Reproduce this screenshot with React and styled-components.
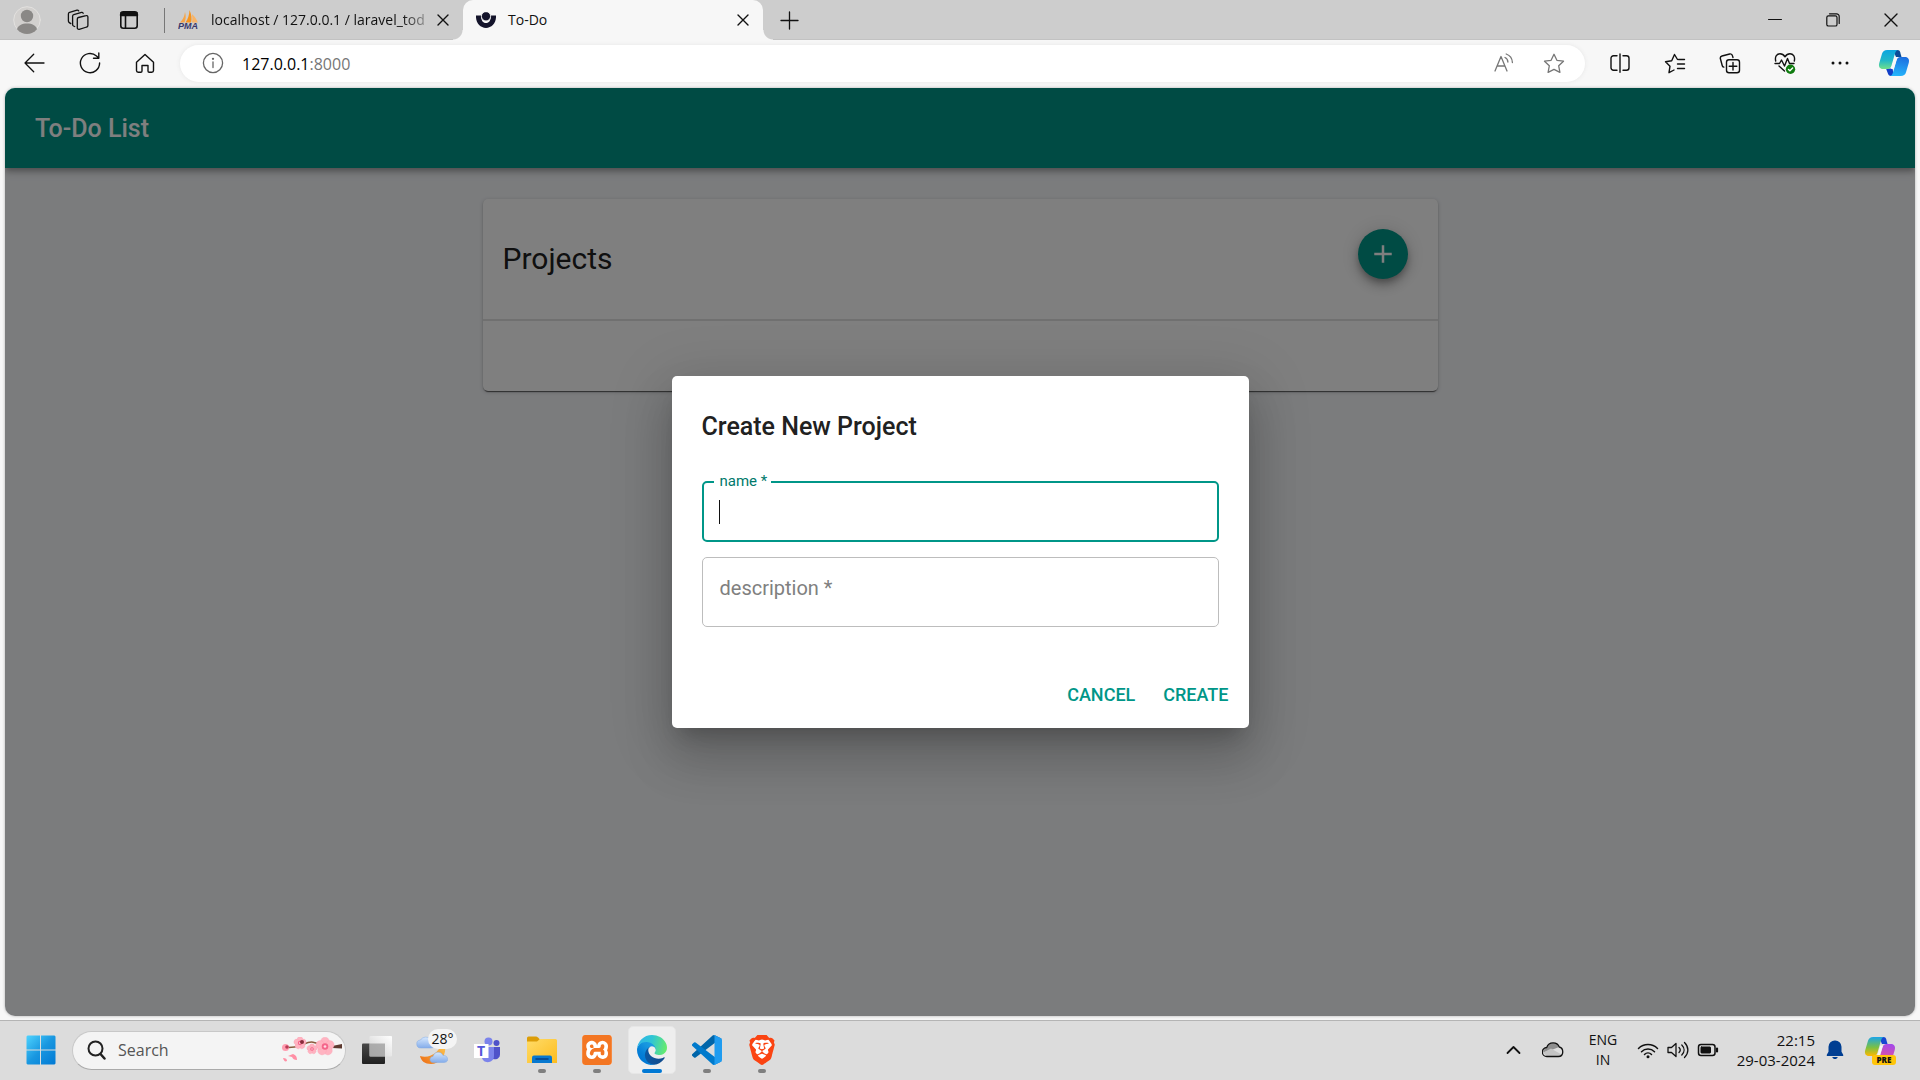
import React from "react";
import styled, { createGlobalStyle, css } from "styled-components";
import { SiBrave, SiXampp } from "react-icons/si";

const GlobalStyle = createGlobalStyle`
  *, *::before, *::after { box-sizing: border-box; }
  html, body { margin: 0; padding: 0; }
  body { font-family: "Open Sans", "Noto Sans", sans-serif; color: #111; background: #f7f7f7; }
  button, input, textarea { font: inherit; }
  h1, h2 { margin: 0; }
`;

const Desktop = styled.div`
  display: flex;
  flex-direction: column;
  height: 100vh;
  overflow: hidden;
`;

const Browser = styled.section`
  flex: 1;
  min-height: 0;
  display: flex;
  flex-direction: column;
  background: #f7f7f7;
`;

/* ---------- tab strip ---------- */

const TabStrip = styled.div`
  display: flex;
  align-items: center;
  height: 40px;
  padding-left: 1px;
  background: #cdcdcd;
  box-shadow: inset 0 -1px 0 #c2c2c2;
`;

const PlainButton = styled.button`
  display: flex;
  align-items: center;
  justify-content: center;
  flex: none;
  width: ${(p) => p.$w}px;
  height: ${(p) => p.$h || 40}px;
  padding: 0;
  border: 0;
  background: none;
  color: ${(p) => p.$color || "#111"};
  cursor: pointer;
`;

const TabDivider = styled.span`
  width: 1px;
  height: 25px;
  margin-left: 10px;
  background: #777;
`;

const Tab = styled.div`
  display: flex;
  align-items: center;
  width: ${(p) => (p.$active ? 300 : 298)}px;
  height: 40px;
  padding: 0 5px 0 13px;
  gap: 12px;
  font-size: 14px;
  line-height: 20px;
  ${(p) =>
    p.$active &&
    css`
      position: relative;
      background: #f7f7f7;
      border-radius: 10px 10px 0 0;
      &::before,
      &::after {
        content: "";
        position: absolute;
        bottom: 0;
        width: 10px;
        height: 10px;
      }
      &::before {
        left: -10px;
        background: radial-gradient(circle at 0 0, #cdcdcd 9px, #f7f7f7 10px);
      }
      &::after {
        right: -10px;
        background: radial-gradient(circle at 100% 0, #cdcdcd 9px, #f7f7f7 10px);
      }
    `}
`;

const TabTitle = styled.span`
  flex: 1;
  min-width: 0;
  margin-right: -12px;
  white-space: nowrap;
  ${(p) => p.$fade && "mask-image: linear-gradient(90deg, #000 88%, rgba(0,0,0,.25));"}
`;

const WindowControls = styled.div`
  display: flex;
  margin-left: auto;
`;

/* ---------- toolbar ---------- */

const Toolbar = styled.div`
  display: flex;
  align-items: center;
  height: 48px;
  padding: 0 0 2px 7px;
`;

const AddressBar = styled.div`
  flex: 1;
  display: flex;
  align-items: center;
  height: 37px;
  margin: 0 7px 0 8px;
  padding: 0 6px 0 22px;
  border-radius: 19px;
  background: #fff;
  box-shadow: 0 0 4px #e6e6e6;
`;

const Address = styled.span`
  flex: 1;
  margin-left: 18px;
  padding-top: 1px;
  font-size: 16px;
  line-height: 24px;
  color: #000;
  span { color: #767676; }
`;

/* ---------- web page ---------- */

const Page = styled.main`
  position: relative;
  flex: 1;
  min-height: 0;
  margin: 0 5px 4px;
  border-radius: 10px;
  overflow: hidden;
  background: #f6f8fb;
  box-shadow: 0 0 3px #aaa;
  font-family: Roboto, sans-serif;
`;

const AppHeader = styled.header`
  position: relative;
  display: flex;
  align-items: center;
  height: 80px;
  padding: 2px 30px 0;
  background: #009688;
  color: #fff;
  box-shadow: 0 3px 5px -1px rgba(0, 0, 0, 0.2), 0 5px 6px rgba(0, 0, 0, 0.14),
    0 1px 13px rgba(0, 0, 0, 0.12);
  h1 { font-size: 25px; line-height: 40px; font-weight: 500; }
`;

const Card = styled.section`
  width: 50%;
  margin: 31px auto 0;
  border-radius: 5px;
  background: #fff;
  box-shadow: 0 3px 1px -2px rgba(0, 0, 0, 0.4), 0 1px 1px rgba(0, 0, 0, 0.28),
    0 1px 4px rgba(0, 0, 0, 0.2);
`;

const CardHeader = styled.div`
  display: flex;
  align-items: flex-start;
  justify-content: space-between;
  padding: 30px 30px 30px 20px;
  border-bottom: 2px solid #e0e0e0;
  h2 { font-size: 30px; line-height: 60px; font-weight: 400; color: #212121; }
`;

const CardBody = styled.div`
  height: 70px;
`;

const AddButton = styled.button`
  display: flex;
  align-items: center;
  justify-content: center;
  width: 50px;
  height: 50px;
  padding: 0;
  border: 0;
  border-radius: 50%;
  background: #009688;
  color: #fff;
  box-shadow: 0 4px 6px -1px rgba(0, 0, 0, 0.25), 0 7px 12px rgba(0, 0, 0, 0.18),
    0 1px 22px rgba(0, 0, 0, 0.14);
`;

const Backdrop = styled.div`
  position: absolute;
  inset: 0;
  display: flex;
  align-items: center;
  justify-content: center;
  background: rgba(0, 0, 0, 0.5);
`;

const Dialog = styled.form`
  width: 577px;
  padding: 31px 30px 11px;
  border-radius: 5px;
  background: #fff;
  box-shadow: 0 14px 19px -9px rgba(0, 0, 0, 0.2), 0 30px 48px 4px rgba(0, 0, 0, 0.14),
    0 11px 58px 10px rgba(0, 0, 0, 0.12);
  h2 { font-size: 25px; line-height: 40px; font-weight: 500; color: #212121; }
`;

const Fields = styled.div`
  display: flex;
  flex-direction: column;
  gap: 15px;
  margin: 34px 0 45px;
`;

const Field = styled.div`
  position: relative;
  display: flex;
`;

const controlStyle = css`
  width: 100%;
  margin: 0;
  border-radius: 5px;
  background: transparent;
  font-size: 20px;
  line-height: 25px;
  color: #212121;
  outline: none;
`;

const TextInput = styled.input`
  ${controlStyle}
  height: 61px;
  padding: 0 16px;
  border: 2px solid #009688;
`;

const TextArea = styled.textarea`
  ${controlStyle}
  height: 70px;
  padding: 20px 16px;
  border: 1px solid #bdbdbd;
  resize: none;
  overflow: hidden;
`;

const FloatingLabel = styled.label`
  position: absolute;
  white-space: nowrap;
  ${(p) =>
    p.$raised
      ? "top: -10px; left: 12px; padding: 0 4px 0 6px; font-size: 15px; line-height: 20px; color: #00796b; background: #fff;"
      : "top: 19px; left: 18px; font-size: 20px; line-height: 25px; color: #808080;"}
`;

const Caret = styled.span`
  position: absolute;
  top: 19px;
  left: 17px;
  width: 1px;
  height: 24px;
  background: #111;
`;

const Actions = styled.div`
  display: flex;
  justify-content: flex-end;
  gap: 8px;
  margin-right: -20px;
`;

const TextButton = styled.button`
  height: 45px;
  padding: 0 10px;
  border: 0;
  background: none;
  color: #009688;
  font-size: 18px;
  line-height: 24px;
  font-weight: 500;
  text-transform: uppercase;
`;

/* ---------- taskbar ---------- */

const Taskbar = styled.footer`
  display: flex;
  align-items: center;
  flex: none;
  gap: 7px;
  height: 60px;
  padding: 0 15px 1px 17px;
  border-top: 1px solid #b4b4b4;
  background: #dcdcdc;
`;

const SearchBox = styled.label`
  display: flex;
  align-items: center;
  width: 274px;
  height: 39px;
  padding: 0 2px 0 14px;
  border: 1px solid #c8c8c8;
  border-bottom-color: #aaa;
  border-radius: 20px;
  background: #f4f4f4;
  input {
    flex: 1;
    min-width: 0;
    margin-left: 12px;
    padding: 0;
    border: 0;
    outline: 0;
    background: none;
    font-size: 16px;
    line-height: 24px;
    color: #222;
  }
  input::placeholder { color: #555; opacity: 1; }
`;

const TaskButton = styled.button`
  position: relative;
  display: flex;
  align-items: center;
  justify-content: center;
  flex: none;
  width: 48px;
  height: 48px;
  padding: 0;
  border: 1px solid ${(p) => (p.$active ? "#e6e6e6" : "transparent")};
  border-radius: 5px;
  background: ${(p) => (p.$active ? "#eeeeee" : "none")};
  ${(p) =>
    p.$running &&
    css`
      &::after {
        content: "";
        position: absolute;
        bottom: 0;
        left: 50%;
        width: ${p.$active ? 20 : 8}px;
        height: 4px;
        margin-left: ${p.$active ? -10 : -4}px;
        border-radius: 2px;
        background: ${p.$active ? "#0078d4" : "#7f7f7f"};
      }
    `}
`;

const Temperature = styled.span`
  position: absolute;
  top: 2px;
  right: -2px;
  width: 29px;
  border-radius: 10px;
  background: #f4f4f4;
  text-align: center;
  font-size: 14px;
  line-height: 20px;
  color: #111;
`;

const BrandTile = styled.span`
  display: flex;
  border-radius: 3px;
  background: ${(p) => p.$bg};
`;

const Tray = styled.div`
  display: flex;
  align-items: center;
  margin-left: auto;
`;

const TrayText = styled.div`
  width: ${(p) => p.$w}px;
  font-size: ${(p) => p.$size}px;
  line-height: 20px;
  text-align: ${(p) => p.$align};
  white-space: nowrap;
`;

/* ---------- drawings ---------- */

const Svg = ({ w, h, sw = 1.4, children }) => (
  <svg width={w} height={h} viewBox={`0 0 ${w} ${h}`} fill="none" stroke="currentColor"
    strokeWidth={sw} strokeLinecap="round" strokeLinejoin="round" aria-hidden="true">
    {children}
  </svg>
);

const AvatarIcon = () => (
  <Svg w={28} h={28}>
    <circle cx="14" cy="14" r="13.3" fill="#d2d0ce" stroke="#e3e1df" strokeWidth="1" />
    <circle cx="14" cy="10" r="6.2" fill="#8a8886" stroke="none" />
    <path d="M4 23.3C5 19.500 9 17.600 14 17.600s9 1.900 10 5.700A13 13 0 0 1 4 23.300Z" fill="#8a8886" stroke="none" />
  </Svg>
);
const WorkspacesIcon = () => (
  <Svg w={22} h={22} sw={1.3}>
    <path d="m11.500 8.500 7.500-1.900a1.500 1.500 0 0 1 1.900 1.400v8.500c0 .8-.4 1.300-1.200 1.500l-7.500 2.300a1.500 1.500 0 0 1-1.900-1.400v-8.900c0-.8.4-1.300 1.200-1.500Z" />
    <path d="M7.700 17.500 6.500 17c-.6-.3-.9-.8-.9-1.400V7.300c0-.8.5-1.400 1.200-1.600l7.700-2.300c.8-.2 1.300.1 1.700.8" />
    <path d="m3.800 14.600-1.500-1c-.6-.4-.9-.9-.9-1.600V5c0-.8.5-1.400 1.200-1.600l7.400-2.200c.8-.2 1.300.1 1.700.7" />
  </Svg>
);
const VerticalTabsIcon = () => (
  <Svg w={20} h={20} sw={1.6}>
    <rect x="1.800" y="1.800" width="16.400" height="16.400" rx="2.500" />
    <path d="M1.500 2h17v4h-17Z" fill="currentColor" stroke="none" />
    <path d="M2 5h16" strokeWidth="2.500" /><path d="M6.500 6v12" />
  </Svg>
);
const PmaIcon = () => (
  <svg width="21" height="20" viewBox="0 0 21 20" aria-hidden="true">
    <path d="M2 12.500C5 10 6.500 6 7 2c1.300 4 .8 7.500-.5 10.500Z" fill="#f6a64a" />
    <path d="M7.500 12.500C10 9 11.300 5 11.500 0c2 4 2.500 9 1.500 12.500Z" fill="#f7941d" />
    <path d="M14 12.500c.6-3 .4-6-.2-8.500 2.700 2 4.800 5 6 8.500Z" fill="#f9b466" />
    <text x="0" y="19" fontFamily="Liberation Sans, sans-serif" fontSize="9" fontWeight="700" fontStyle="italic" fill="#39396b">PMA</text>
  </svg>
);
const TodoFavicon = () => (
  <svg width="20" height="16" viewBox="0 0 20 16" fill="#14142b" aria-hidden="true">
    <path d="M0 3.500h5c0 5 2 7.500 5 7.500s5-2.500 5-7.500h5C20.500 10.500 16 16 10 16S-.5 10.500 0 3.500Z" />
    <circle cx="10" cy="4.300" r="4.600" stroke="#f7f7f7" strokeWidth=".8" />
  </svg>
);
const CloseIcon = ({ s = 11 }) => (
  <Svg w={s + 2} h={s + 2}><path d={`M1 1 ${s + 1} ${s + 1}M${s + 1} 1 1 ${s + 1}`} /></Svg>
);
const PlusIcon = () => <Svg w={19} h={19} sw={1.3}><path d="M9.500 1v17M1 9.500h17" /></Svg>;
const MinimiseIcon = () => <Svg w={14} h={14} sw={1}><path d="M.5 6.500h13" /></Svg>;
const RestoreIcon = () => (
  <Svg w={14} h={14} sw={1.2}>
    <rect x=".8" y="2.800" width="10.200" height="10.200" rx="1.600" />
    <path d="M3.500.8h7a2.600 2.600 0 0 1 2.700 2.700v7" />
  </Svg>
);
const BackIcon = () => <Svg w={21} h={20} sw={1.3}><path d="M20 10H1M9.700 1.300 1 10l8.700 8.700" /></Svg>;
const RefreshIcon = () => (
  <Svg w={22} h={22} sw={1.4}><path d="M20.600 11A9.600 9.600 0 1 1 17.500 4l2 1.800M19.800 1v5.300h-5.300" /></Svg>
);
const HomeIcon = () => (
  <Svg w={20} h={21} sw={1.4}>
    <path d="M1.500 9.300 10 1.500l8.500 7.800v8.200a1.700 1.700 0 0 1-1.700 1.700h-2.600a1.200 1.200 0 0 1-1.200-1.200v-5.500H7V18a1.200 1.200 0 0 1-1.200 1.200H3.200a1.700 1.700 0 0 1-1.700-1.700Z" />
  </Svg>
);
const InfoIcon = () => (
  <Svg w={22} h={22} sw={1.3}>
    <circle cx="11" cy="11" r="9.600" /><path d="M11 10v5.500" /><circle cx="11" cy="6.800" r=".5" fill="currentColor" />
  </Svg>
);
const ReadAloudIcon = () => (
  <Svg w={20} h={20} sw={1.3}>
    <path d="m1 18 6-14.500L13 18M3.300 13h7.500M11 4.500c1.800.8 2.800 2.400 2.900 4.500M12.200 1c3.800 1.300 6 4.300 6.200 8.500" />
  </Svg>
);
const STAR = "m11 1.300 2.900 6 6.600.9-4.800 4.600 1.200 6.600L11 16.300l-5.900 3.100 1.200-6.600L1.500 8.200l6.600-.9Z";
const StarIcon = () => <Svg w={22} h={21} sw={1.3}><path d={STAR} /></Svg>;
const SplitIcon = () => (
  <Svg w={20} h={20} sw={1.4}>
    <path d="M7 2.800H3.500a2.500 2.500 0 0 0-2.500 2.500v9.400a2.500 2.500 0 0 0 2.500 2.500H7M13 2.800h3.500A2.500 2.500 0 0 1 19 5.300v9.400a2.500 2.500 0 0 1-2.500 2.500H13M10 1v18.300" />
  </Svg>
);
const FavouritesIcon = () => (
  <Svg w={22} h={21} sw={1.4}>
    <path d="M10 17 5 19.700l1-6.500-4.500-4.500 6.200-.9L10.500 1.500l3 5M14.500 6.500h6M13.500 11h7M13.500 15.500h7" />
  </Svg>
);
const CollectionsIcon = () => (
  <Svg w={22} h={21} sw={1.4}>
    <path d="M14 4.500 13.400 2.600A2.200 2.200 0 0 0 10.700 1L3 3A2.300 2.300 0 0 0 1.400 5.800l1.800 6.700c.2.900.8 1.400 1.600 1.600" />
    <rect x="7.500" y="6.800" width="13" height="13" rx="2.500" /><path d="M14 9.500v7.600M10.200 13.300h7.600" />
  </Svg>
);
const HealthIcon = () => (
  <Svg w={22} h={22} sw={1.4}>
    <path d="M1.700 9C.6 4.500 3 1.800 6 1.800c2.200 0 3.800 1.200 5 3 1.200-1.800 2.800-3 5-3 3 0 5.400 2.700 4.300 7.200M1 11.500h4.500l2-3.500 3 6 3-7.500 2 5H20M5 14l5.500 5" />
    <circle cx="16.500" cy="17.300" r="4.700" fill="#107c10" stroke="none" />
    <path d="m14.500 17.500 1.400 1.300 2.700-2.900" stroke="#fff" />
  </Svg>
);
const MoreIcon = () => (
  <Svg w={18} h={4}>
    {[2, 9, 16].map((x) => <circle key={x} cx={x} cy="2" r="1.500" fill="currentColor" stroke="none" />)}
  </Svg>
);
const CopilotIcon = ({ pre }) => {
  const id = pre ? "p" : "c";
  const c = pre
    ? ["#1aa5e8", "#7bc043", "#ffb800", "#1746d1", "#a549e8", "#f0568c"]
    : ["#0ba5e0", "#22b8c8", "#6fe08a", "#123fc8", "#1c6fe0", "#25b5fb"];
  return (
    <svg width="32" height="30" viewBox="0 0 32 30" aria-hidden="true">
      <defs>
        <linearGradient id={`${id}1`} x1="0" y1="0" x2="0" y2="1">
          <stop offset="0" stopColor={c[0]} /><stop offset=".55" stopColor={c[1]} /><stop offset="1" stopColor={c[2]} />
        </linearGradient>
        <linearGradient id={`${id}2`} x1=".6" y1="0" x2=".4" y2="1">
          <stop offset="0" stopColor={c[4]} /><stop offset="1" stopColor={c[5]} />
        </linearGradient>
      </defs>
      <path d="M15 2h4.500c1.500 0 2.300.8 2.700 2.200L23.500 9H18Z" fill={pre ? c[3] : "#0b4b96"} />
      <path d="M8 20.500h6.500L16 28h-3c-1.800 0-2.600-.9-3.100-2.500Z" fill={pre ? "#f58b45" : c[3]} />
      <path d="M9.200 2H20c-2 .4-2.700 2.400-3.300 4.500l-3.200 11c-.6 2.100-1.700 3.500-4 3.500H5c-3.200 0-4.700-2.500-3.800-5.800L4 5.800C4.700 3.300 6.500 2 9.200 2Z" fill={`url(#${id}1)`} />
      <path d="M22.800 28H12c2-.4 2.700-2.400 3.300-4.500l3.200-11c.6-2.100 1.700-3.500 4-3.500H27c3.200 0 4.700 2.500 3.800 5.800L28 24.200c-.7 2.500-2.500 3.800-5.200 3.800Z" fill={`url(#${id}2)`} />
      <path d="M16.300 10.500h2.700l-3.300 10.500H13Z" fill="#f7f7f7" />
      {pre && (
        <g>
          <rect x="8" y="20" width="24" height="10" rx="3" fill="#ffc50a" />
          <text x="20" y="28" textAnchor="middle" fontFamily="Open Sans, sans-serif" fontSize="8" fontWeight="800" fill="#111">PRE</text>
        </g>
      )}
    </svg>
  );
};

const WindowsIcon = () => (
  <svg width="30" height="30" viewBox="0 0 30 30" aria-hidden="true">
    <defs>
      <linearGradient id="win" x1="0" y1="0" x2="30" y2="30" gradientUnits="userSpaceOnUse">
        <stop stopColor="#50d5ff" /><stop offset=".5" stopColor="#1997e0" /><stop offset="1" stopColor="#0078d4" />
      </linearGradient>
    </defs>
    <path d="M1.500.5H14v14H.5v-13Zm13.500 0h13.500l1 1v13H15ZM.5 15.500H14v14H1.500l-1-1Zm14.500 0h14.500v13l-1 1H15Z" fill="url(#win)" />
  </svg>
);
const SearchIcon = () => (
  <svg width="19" height="20" viewBox="0 0 19 20" fill="none" stroke="#222" strokeWidth="2" strokeLinecap="round" aria-hidden="true">
    <circle cx="8.500" cy="8.500" r="7" /><path d="m13.500 14 4 4.500" strokeWidth="2.500" />
  </svg>
);
const Flower = ({ x, y, r }) => (
  <g transform={`translate(${x} ${y})`}>
    {[0, 72, 144, 216, 288].map((a) => (
      <circle key={a} cy={-r * 0.56} r={r * 0.48} fill="#ffb3c1" stroke="#fa9db0" strokeWidth=".3" transform={`rotate(${a})`} />
    ))}
    <circle r={r * 0.36} fill="#f4658a" /><circle r={r * 0.15} fill="#ffd9e2" />
  </g>
);
const BlossomIcon = () => (
  <svg width="62" height="26" viewBox="0 0 62 26" fill="none" aria-hidden="true">
    <path d="M3 10c8 2 14-1 20-3 9-4 12-1 18 2l9 2" stroke="#8a5a3c" strokeWidth="1.500" />
    <path d="m51 9 10-2v4.500l-10-.5Z" fill="#5d3a30" />
    <Flower x={44} y={9.5} r={9} /><Flower x={31} y={12} r={5} /><Flower x={19} y={6} r={6} />
    <circle cx="4.500" cy="10.500" r="3.500" fill="#ff9db0" /><circle cx="6" cy="10" r="1.800" fill="#b93a55" />
    <circle cx="21" cy="5" r="2" fill="#8a2b3b" />
    <path d="m7 19 5-2c3 1 4 3 4 6-3 0-4-1-5-3ZM2 21c3 0 4 1 4 3-2 1-3 0-4-3Z" fill="#ff8fa5" />
  </svg>
);
const TaskViewIcon = () => (
  <svg width="30" height="28" viewBox="0 0 30 28" aria-hidden="true">
    <defs>
      <linearGradient id="tv1" x1="0" y1="0" x2="0" y2="1"><stop stopColor="#484848" /><stop offset="1" stopColor="#202020" /></linearGradient>
      <linearGradient id="tv2" x1="0" y1="1" x2="1" y2="0"><stop stopColor="#d0d0d0" /><stop offset="1" stopColor="#fff" /></linearGradient>
    </defs>
    <rect y="7.500" width="23" height="20.500" rx="1" fill="url(#tv1)" />
    <rect x="7.500" width="22.500" height="20.500" rx="1" fill="url(#tv2)" />
    <path d="M7.500 7.500H23v13H7.500Z" fill="#999" opacity=".75" />
  </svg>
);
const WeatherIcon = () => (
  <svg width="32" height="30" viewBox="0 0 32 30" aria-hidden="true">
    <defs>
      <linearGradient id="cl" x1="0" y1="0" x2="0" y2="1"><stop stopColor="#d5e7fd" /><stop offset="1" stopColor="#84acea" /></linearGradient>
      <linearGradient id="mn" x1="1" y1="0" x2="0" y2="1"><stop stopColor="#ffd257" /><stop offset="1" stopColor="#ed6b12" /></linearGradient>
    </defs>
    <path d="M26 5C34 15 26 29 15 29 9 29 5 26 4 21c10 3 21-4 22-16Z" fill="url(#mn)" />
    <path d="M5 13a4 4 0 0 1-.5-8C6 2 13 0 15 6c3 0 4 2 4 4 0 2-2 3-4 3Z" fill="url(#cl)" stroke="#83aae3" strokeWidth=".5" />
    <path d="M17 27.500c-4 0-4-6 0-6 1-5 8-6 10-1 5-1 7 7 1 7Z" fill="url(#cl)" stroke="#83aae3" strokeWidth=".5" />
  </svg>
);
const TeamsIcon = () => (
  <svg width="28" height="26" viewBox="0 0 28 26" aria-hidden="true">
    <circle cx="23.500" cy="6" r="3" fill="#4f52c9" /><path d="M19 10h8v7c0 4-3 6-7 5Z" fill="#4f52c9" />
    <circle cx="15.500" cy="4.500" r="4" fill="#7b83eb" /><path d="M9 10h12v9c0 8-12 8-12 1Z" fill="#7b83eb" />
    <rect x="1" y="7" width="14.500" height="14" fill="#fff" />
    <text x="8" y="18.500" textAnchor="middle" fontFamily="Open Sans, sans-serif" fontWeight="700" fontSize="14" fill="#5558d9">T</text>
  </svg>
);
const FolderIcon = () => (
  <svg width="30" height="28" viewBox="0 0 30 28" aria-hidden="true">
    <defs>
      <linearGradient id="fd" x1="0" y1="0" x2="1" y2="1"><stop stopColor="#ffdc69" /><stop offset="1" stopColor="#fdbc1e" /></linearGradient>
    </defs>
    <path d="M0 2Q0 .5 1.500.5H9q1 0 2 1L13 3.500V8H0Z" fill="#dc9d08" />
    <path d="M0 5.500h10L13 3h15.500Q30 3 30 4.500V27H0Z" fill="url(#fd)" />
    <path d="M5 27v-5.500Q5 19.500 7 19.500h16q2 0 2 2V27Z" fill="#0878cf" />
    <path d="M9 23h12" stroke="#063f86" strokeWidth="1.500" strokeLinecap="round" />
  </svg>
);
const EdgeIcon = () => (
  <svg width="30" height="30" viewBox="0 0 256 256" aria-hidden="true">
    <defs>
      <linearGradient id="e1" x1="63" y1="178" x2="241" y2="178" gradientUnits="userSpaceOnUse"><stop stopColor="#0c59a4" /><stop offset="1" stopColor="#114a8b" /></linearGradient>
      <linearGradient id="e2" x1="157" y1="100" x2="46" y2="221" gradientUnits="userSpaceOnUse"><stop stopColor="#1b9de2" /><stop offset=".3" stopColor="#1595df" /><stop offset=".7" stopColor="#0680d7" /><stop offset="1" stopColor="#0078d4" /></linearGradient>
      <linearGradient id="e3" x1="10" y1="70" x2="250" y2="130" gradientUnits="userSpaceOnUse"><stop stopColor="#30b6e6" /><stop offset=".45" stopColor="#2fc5d5" /><stop offset="1" stopColor="#66eb6e" /></linearGradient>
    </defs>
    <g transform="translate(-4.630 -4.920)">
      <path fill="url(#e1)" d="M235.680 195.460a93.730 93.730 0 0 1-10.540 4.710 101.870 101.870 0 0 1-35.900 6.460c-47.320 0-88.540-32.550-88.540-74.320A31.480 31.480 0 0 1 117.130 105c-42.800 1.800-53.800 46.400-53.800 72.530 0 73.880 68.090 81.370 82.760 81.370 7.910 0 19.840-2.300 27-4.560l1.310-.44a128.340 128.340 0 0 0 66.600-52.800 4 4 0 0 0-5.320-5.640Z" />
      <path fill="url(#e2)" d="M110.340 246.340A79.200 79.200 0 0 1 87.600 225a80.720 80.720 0 0 1 29.530-120c3.120-1.470 8.450-4.130 15.540-4a32.350 32.350 0 0 1 25.690 13 31.880 31.880 0 0 1 6.360 18.660c0-.21 24.460-79.600-80-79.600-43.900 0-80 41.660-80 78.210a130.150 130.150 0 0 0 12.110 56 128 128 0 0 0 156.380 67.110 75.550 75.550 0 0 1-62.780-8Z" />
      <path fill="url(#e3)" d="M156.940 153.780c-.81 1.050-3.300 2.500-3.300 5.660 0 2.610 1.700 5.120 4.720 7.230 14.380 10 41.490 8.680 41.560 8.680a59.560 59.560 0 0 0 30.270-8.350 61.380 61.380 0 0 0 30.430-52.880c.26-22.410-8-37.310-11.340-43.910C228.090 28.760 182.350 4.920 132.610 4.920a128 128 0 0 0-128 126.200c.48-36.540 36.800-66.050 80-66.050 3.500 0 23.460.34 42 10.070 16.340 8.580 24.900 18.940 30.850 29.210 6.180 10.670 7.280 24.150 7.280 29.520s-2.740 13.330-7.800 19.910Z" />
    </g>
  </svg>
);
const CodeIcon = () => (
  <svg width="30" height="30" viewBox="0 0 100 100" aria-hidden="true">
    <path fill="#0065a9" d="M96.460 10.800 75.860.88A6.200 6.200 0 0 0 68.750 2.080L1.300 63.580a4.170 4.170 0 0 0 0 6.170l5.510 5a4.160 4.160 0 0 0 5.320.24L93.360 13.370A4.130 4.130 0 0 1 100 16.670v-.24a6.250 6.250 0 0 0-3.540-5.630Z" />
    <path fill="#007acc" d="m96.460 89.200-20.600 9.920a6.200 6.200 0 0 1-7.110-1.200L1.300 36.420a4.170 4.170 0 0 1 0-6.170l5.510-5a4.160 4.160 0 0 1 5.320-.24l81.230 61.620A4.130 4.130 0 0 0 100 83.330v.24a6.250 6.250 0 0 1-3.540 5.630Z" />
    <path fill="#1f9cf0" d="M75.860 99.130a6.200 6.200 0 0 1-7.110-1.210C71.060 100.220 75 98.590 75 95.330V4.670C75 1.410 71.060-.22 68.750 2.080A6.200 6.200 0 0 1 75.860.87l20.600 9.910A6.250 6.250 0 0 1 100 16.410v67.180a6.250 6.250 0 0 1-3.540 5.630Z" />
  </svg>
);
const BraveIcon = () => (
  <svg width="30" height="30" viewBox="0 0 30 30" aria-hidden="true">
    <path d="M8 5h14l3 5-2 10-8 7-8-7-2-10Z" fill="#fff" />
    <SiBrave size={30} color="#fb4412" />
  </svg>
);
const ChevronUpIcon = () => <Svg w={15} h={10} sw={1.8}><path d="m1.500 8 6-6 6 6" /></Svg>;
const CloudIcon = () => (
  <Svg w={22} h={16} sw={1.3}>
    <path d="M5 14.500a4.500 4.500 0 0 1-.3-9C7-.5 15-.5 17.300 5c4.500 1 5 9.500-1 9.500Z" fill="#dedede" stroke="none" />
    <path d="M1.300 10.500C1 8 3 6 4.700 5.500 7-.5 15-.5 17.300 5l-6 2.300Z" fill="#8f8f8f" stroke="none" />
    <path d="M1.300 10.500 9 6.500l10.500 6-3 2H5Z" fill="#c4c4c4" stroke="none" />
    <path d="M5 14.500a4.500 4.500 0 0 1-.3-9C7-.5 15-.5 17.300 5c4.500 1 5 9.500-1 9.500Z" />
  </Svg>
);
const WifiIcon = () => (
  <Svg w={22} h={17} sw={1.5}>
    <path d="M1.500 6.500a13.500 13.500 0 0 1 19 0M4.500 9.700a9.200 9.200 0 0 1 13 0M7.500 12.500a5 5 0 0 1 7 0" />
    <circle cx="11" cy="14.800" r="1.500" fill="currentColor" stroke="none" />
  </Svg>
);
const SpeakerIcon = () => (
  <Svg w={22} h={18} sw={1.3}>
    <path d="M1 6.500v5h3.500L9 15.500v-13L4.500 6.500ZM12 6.500c1.500 1.500 1.500 3.500 0 5M14.800 4c3 3 3 7 0 10M17.500 1.500c4.500 4.500 4.500 10.500 0 15" />
  </Svg>
);
const BatteryIcon = () => (
  <Svg w={22} h={14} sw={1.5}>
    <rect x="1.500" y="1.500" width="16.500" height="11" rx="2.500" />
    <rect x="4" y="4" width="9.500" height="6" rx=".5" fill="currentColor" stroke="currentColor" strokeWidth="1" />
    <path d="M20 5.500v3" strokeWidth="2.200" />
  </Svg>
);
const BellIcon = () => (
  <svg width="18" height="20" viewBox="0 0 18 20" fill="#003e92" aria-hidden="true">
    <path d="M9 .5a6.300 6.300 0 0 1 6.500 6.300v5l1.700 3v1.200H.8v-1.200l1.700-3v-5A6.300 6.300 0 0 1 9 .5ZM6.300 17h5.400c-.6 2.700-4.800 2.700-5.400 0Z" />
  </svg>
);

/* ---------- composition ---------- */

const toolbarActions = [
  ["Split screen", SplitIcon],
  ["Favourites", FavouritesIcon],
  ["Collections", CollectionsIcon],
  ["Browser essentials", HealthIcon],
  ["Settings and more", MoreIcon],
];

export default function App() {
  return (
    <Desktop>
      <GlobalStyle />
      <Browser>
        <TabStrip>
          <PlainButton $w={51} aria-label="Profile"><AvatarIcon /></PlainButton>
          <PlainButton $w={51} aria-label="Workspaces"><WorkspacesIcon /></PlainButton>
          <PlainButton $w={51} aria-label="Tab actions"><VerticalTabsIcon /></PlainButton>
          <TabDivider />
          <Tab>
            <PmaIcon />
            <TabTitle $fade>localhost / 127.0.0.1 / laravel_tod</TabTitle>
            <PlainButton $w={30} aria-label="Close tab"><CloseIcon s={10} /></PlainButton>
          </Tab>
          <Tab $active>
            <TodoFavicon />
            <TabTitle>To-Do</TabTitle>
            <PlainButton $w={30} aria-label="Close tab"><CloseIcon s={10} /></PlainButton>
          </Tab>
          <PlainButton $w={53} aria-label="New tab"><PlusIcon /></PlainButton>
          <WindowControls>
            <PlainButton $w={58} aria-label="Minimise"><MinimiseIcon /></PlainButton>
            <PlainButton $w={58} aria-label="Restore"><RestoreIcon /></PlainButton>
            <PlainButton $w={58} aria-label="Close window"><CloseIcon s={12} /></PlainButton>
          </WindowControls>
        </TabStrip>
        <Toolbar>
          <PlainButton $w={55} aria-label="Back"><BackIcon /></PlainButton>
          <PlainButton $w={55} aria-label="Refresh"><RefreshIcon /></PlainButton>
          <PlainButton $w={55} aria-label="Home"><HomeIcon /></PlainButton>
          <AddressBar>
            <PlainButton $w={22} $h={36} $color="#666" aria-label="Site information"><InfoIcon /></PlainButton>
            <Address>127.0.0.1<span>:8000</span></Address>
            <PlainButton $w={50} $h={36} $color="#767676" aria-label="Read aloud"><ReadAloudIcon /></PlainButton>
            <PlainButton $w={50} $h={36} $color="#767676" aria-label="Add to favourites"><StarIcon /></PlainButton>
          </AddressBar>
          {toolbarActions.map(([name, Icon]) => (
            <PlainButton key={name} $w={55} aria-label={name}><Icon /></PlainButton>
          ))}
          <PlainButton $w={53} aria-label="Copilot"><CopilotIcon /></PlainButton>
        </Toolbar>
        <Page>
          <AppHeader><h1>To-Do List</h1></AppHeader>
          <Card>
            <CardHeader>
              <h2>Projects</h2>
              <AddButton aria-label="Add project">
                <svg width="30" height="30" viewBox="0 0 24 24" fill="currentColor" aria-hidden="true">
                  <path d="M19 13h-6v6h-2v-6H5v-2h6V5h2v6h6v2z" />
                </svg>
              </AddButton>
            </CardHeader>
            <CardBody />
          </Card>
          <Backdrop>
            <Dialog role="dialog" aria-labelledby="dialog-title" onSubmit={(e) => e.preventDefault()}>
              <h2 id="dialog-title">Create New Project</h2>
              <Fields>
                <Field>
                  <TextInput id="name" type="text" />
                  <FloatingLabel htmlFor="name" $raised>name *</FloatingLabel>
                  <Caret />
                </Field>
                <Field>
                  <TextArea id="description" rows={1} />
                  <FloatingLabel htmlFor="description">description *</FloatingLabel>
                </Field>
              </Fields>
              <Actions>
                <TextButton type="button">Cancel</TextButton>
                <TextButton type="submit">Create</TextButton>
              </Actions>
            </Dialog>
          </Backdrop>
        </Page>
      </Browser>
      <Taskbar>
        <TaskButton aria-label="Start"><WindowsIcon /></TaskButton>
        <SearchBox>
          <SearchIcon />
          <input type="text" placeholder="Search" aria-label="Search" />
          <BlossomIcon />
        </SearchBox>
        <TaskButton aria-label="Task view"><TaskViewIcon /></TaskButton>
        <TaskButton aria-label="Weather"><WeatherIcon /><Temperature>28°</Temperature></TaskButton>
        <TaskButton aria-label="Teams"><TeamsIcon /></TaskButton>
        <TaskButton aria-label="File Explorer" $running><FolderIcon /></TaskButton>
        <TaskButton aria-label="XAMPP" $running>
          <BrandTile $bg="#fff"><SiXampp size={30} color="#f37623" /></BrandTile>
        </TaskButton>
        <TaskButton aria-label="Edge" $running $active><EdgeIcon /></TaskButton>
        <TaskButton aria-label="Visual Studio Code" $running><CodeIcon /></TaskButton>
        <TaskButton aria-label="Brave" $running><BraveIcon /></TaskButton>
        <Tray>
          <PlainButton $w={40} aria-label="Hidden icons"><ChevronUpIcon /></PlainButton>
          <PlainButton $w={40} aria-label="OneDrive"><CloudIcon /></PlainButton>
          <TrayText $w={60} $size={14} $align="center">ENG<br />IN</TrayText>
          <PlainButton $w={30} aria-label="Network"><WifiIcon /></PlainButton>
          <PlainButton $w={30} aria-label="Volume"><SpeakerIcon /></PlainButton>
          <PlainButton $w={30} aria-label="Battery"><BatteryIcon /></PlainButton>
          <TrayText $w={92} $size={15} $align="right">22:15<br />29-03-2024</TrayText>
          <PlainButton $w={40} aria-label="Notifications"><BellIcon /></PlainButton>
          <PlainButton $w={50} aria-label="Copilot preview"><CopilotIcon pre /></PlainButton>
        </Tray>
      </Taskbar>
    </Desktop>
  );
}
